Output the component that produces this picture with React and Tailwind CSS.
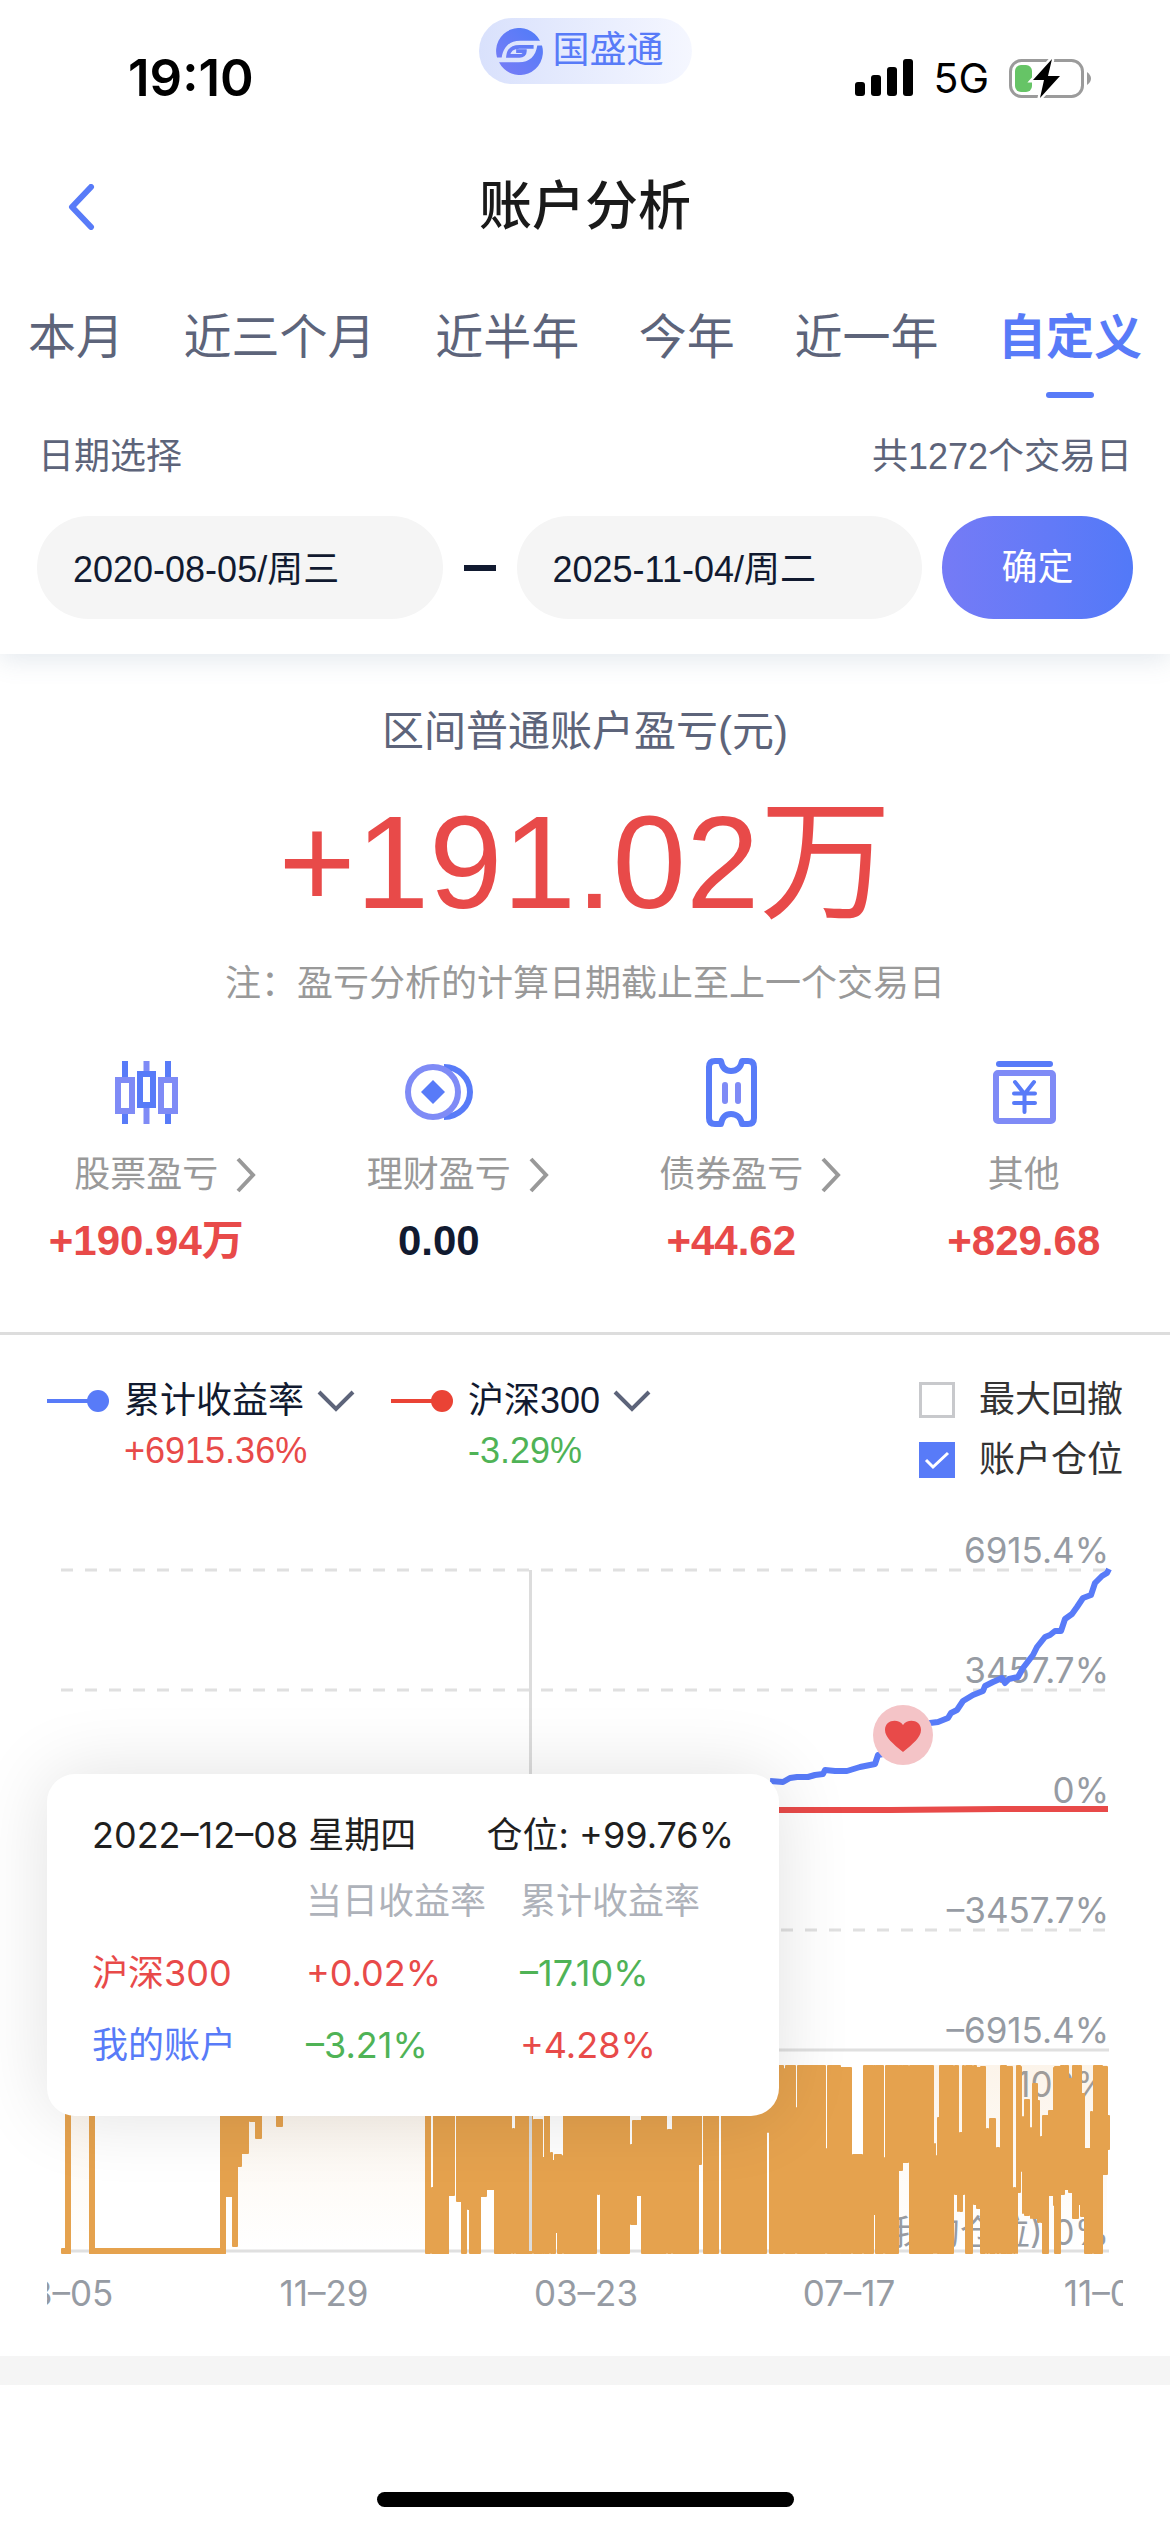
const tabs = ["本月", "近三个月", "近半年", "今年", "近一年", "自定义"];

const stats = [
  { label: "股票盈亏", value: "+190.94万", icon: CandleIcon, link: true, color: "text-[#e84a49]" },
  { label: "理财盈亏", value: "0.00", icon: CoinIcon, link: true, color: "text-[#111a30]" },
  { label: "债券盈亏", value: "+44.62", icon: TicketIcon, link: true, color: "text-[#e84a49]" },
  { label: "其他", value: "+829.68", icon: YuanIcon, link: false, color: "text-[#e84a49]" },
];

const tooltipRows = [
  { name: "沪深300", day: "+0.02%", total: "–17.10%", nameColor: "text-[#e84a49]", dayColor: "text-[#e84a49]", totalColor: "text-[#4fb356]" },
  { name: "我的账户", day: "–3.21%", total: "+4.28%", nameColor: "text-[#587bf8]", dayColor: "text-[#4fb356]", totalColor: "text-[#e84a49]" },
];

const yTicks = [
  { y: 1570, label: "6915.4%" },
  { y: 1690, label: "3457.7%" },
  { y: 1810, label: "0%" },
  { y: 1930, label: "–3457.7%" },
  { y: 2050, label: "–6915.4%" },
];

const xTicks = [
  { x: 61, label: "08–05" },
  { x: 324, label: "11–29" },
  { x: 586, label: "03–23" },
  { x: 849, label: "07–17" },
  { x: 1109, label: "11–04" },
];

// position columns: left, right, top, bottom
const columns = [
  [61, 71, 2248, 2254], [65, 71, 2065, 2254], [89, 95, 2065, 2254], [89, 226, 2248, 2254],
  [220, 226, 2065, 2254], [225, 233, 2065, 2197], [232, 238, 2065, 2247], [237, 242, 2065, 2167],
  [241, 249, 2065, 2154], [249, 256, 2065, 2122], [255, 262, 2065, 2139], [276, 283, 2065, 2127],
  [425, 431, 2065, 2254], [431, 449, 2187, 2254], [433, 449, 2065, 2254], [448, 455, 2065, 2196],
  [456, 462, 2065, 2202], [461, 467, 2065, 2254], [467, 470, 2065, 2210], [469, 481, 2065, 2254],
  [480, 487, 2065, 2197], [486, 495, 2065, 2190], [494, 512, 2065, 2254], [512, 515, 2128, 2254],
  [515, 533, 2065, 2254], [533, 543, 2119, 2254], [542, 545, 2157, 2254], [544, 550, 2065, 2254],
  [550, 553, 2152, 2254], [552, 556, 2160, 2254], [554, 562, 2154, 2233], [557, 563, 2155, 2254],
  [563, 597, 2065, 2254], [597, 600, 2065, 2195], [600, 630, 2065, 2254], [630, 637, 2144, 2225],
  [632, 637, 2120, 2225], [636, 642, 2120, 2196], [641, 667, 2065, 2254], [667, 672, 2129, 2254],
  [672, 699, 2065, 2254], [698, 702, 2065, 2165], [703, 719, 2065, 2254], [721, 767, 2065, 2254],
  [767, 769, 2065, 2133], [769, 784, 2065, 2254], [784, 786, 2068, 2254], [785, 796, 2065, 2254],
  [796, 798, 2107, 2254], [797, 826, 2065, 2254], [826, 828, 2148, 2254], [827, 841, 2065, 2254],
  [840, 852, 2067, 2254], [852, 863, 2154, 2254], [863, 874, 2065, 2254], [873, 876, 2065, 2215],
  [875, 884, 2065, 2254], [884, 886, 2157, 2254], [885, 899, 2065, 2254], [898, 903, 2065, 2171],
  [902, 909, 2065, 2163], [909, 934, 2065, 2254], [934, 936, 2143, 2254], [936, 938, 2155, 2254],
  [937, 940, 2117, 2254], [939, 954, 2065, 2254], [954, 958, 2065, 2195], [957, 959, 2065, 2212],
  [959, 963, 2132, 2212], [962, 965, 2065, 2195], [965, 973, 2065, 2254], [973, 977, 2065, 2205],
  [976, 981, 2067, 2209], [980, 986, 2066, 2254], [986, 989, 2128, 2254], [989, 996, 2118, 2254],
  [996, 1000, 2147, 2254], [1000, 1007, 2065, 2254], [1006, 1013, 2066, 2254], [1013, 1016, 2187, 2254],
  [1016, 1018, 2065, 2254], [1017, 1021, 2065, 2193], [1020, 1022, 2066, 2172], [1022, 1024, 2116, 2214],
  [1024, 1030, 2099, 2216], [1030, 1032, 2127, 2219], [1032, 1038, 2083, 2219], [1037, 1040, 2100, 2223],
  [1040, 1043, 2136, 2223], [1042, 1049, 2115, 2254], [1048, 1054, 2110, 2196], [1053, 1055, 2067, 2206],
  [1054, 1061, 2066, 2254], [1060, 1065, 2065, 2195], [1064, 1069, 2065, 2190], [1068, 1073, 2078, 2193],
  [1072, 1079, 2065, 2219], [1078, 1082, 2065, 2205], [1080, 1085, 2093, 2217], [1084, 1091, 2148, 2254],
  [1090, 1093, 2111, 2254], [1093, 1103, 2065, 2254], [1102, 1108, 2066, 2175], [1106, 1110, 2115, 2150],
];

const returns = [
  [770, 1781], [783, 1782], [790, 1778], [797, 1777], [808, 1777], [815, 1775], [823, 1774], [825, 1770],
  [835, 1771], [847, 1771], [860, 1767], [875, 1764], [878, 1755], [883, 1754], [903, 1735], [930, 1723],
  [938, 1722], [948, 1718], [951, 1713], [957, 1710], [963, 1701], [973, 1695], [983, 1691], [985, 1686],
  [993, 1682], [1002, 1678], [1005, 1683], [1009, 1679], [1018, 1677], [1023, 1668], [1033, 1655], [1037, 1647],
  [1045, 1637], [1050, 1635], [1055, 1631], [1061, 1631], [1065, 1619], [1072, 1614], [1077, 1607], [1083, 1598],
  [1091, 1595], [1095, 1583], [1102, 1576], [1107, 1573], [1109, 1569],
];

function CandleIcon() {
  return (
    <svg viewBox="0 0 72 72" className="size-[72px]" fill="none" strokeWidth="6">
      <path d="M15 5v16M15 58v10M58 5v16M58 58v10" stroke="#587bf8" />
      <path d="M36.5 5v12M36.5 51v17" stroke="#7f8bf6" />
      <path d="M8 24h14v31H8zM51 24h14v31H51z" stroke="#7f8bf6" />
      <path d="M30 18h13v31H30z" stroke="#587bf8" />
    </svg>
  );
}

function CoinIcon() {
  return (
    <svg viewBox="0 0 72 72" className="size-[72px]" fill="none" strokeWidth="6">
      <path d="M41 11a26 25 0 0 1 0 50" stroke="#587bf8" />
      <circle cx="30" cy="36" r="25" stroke="#7f8bf6" />
      <path d="M30 24l12 12-12 12-12-12z" fill="#587bf8" />
    </svg>
  );
}

function TicketIcon() {
  return (
    <svg viewBox="0 0 72 72" className="size-[72px]" fill="none" strokeWidth="6" strokeLinejoin="round">
      <path d="M20 5h6c1 6 4 10 10 10s10-4 11-10h6q6 0 6 6v51q0 6-6 6h-6c-1-6-5-10-11-10s-9 4-10 10h-6q-6 0-6-6V11q0-6 6-6z" stroke="#587bf8" />
      <path d="M30 29v16M43 29v16" stroke="#7f8bf6" strokeLinecap="round" />
    </svg>
  );
}

function YuanIcon() {
  return (
    <svg viewBox="0 0 72 72" className="size-[72px]" fill="none" strokeWidth="6">
      <path d="M11 8h51" stroke="#587bf8" strokeLinecap="round" />
      <rect x="8" y="17" width="57" height="48" rx="2" stroke="#7f8bf6" />
      <path d="M27 26l9.500 12 9.500-12M36.500 38v18M26 37.500h21M26 47h21" stroke="#587bf8" strokeWidth="4" strokeLinecap="round" />
    </svg>
  );
}

function LogoMark() {
  return (
    <svg viewBox="0 0 140 140" className="size-[47px]" fill="none">
      <defs>
        <linearGradient id="mark" gradientUnits="userSpaceOnUse" x1="0" y1="140" x2="140" y2="0">
          <stop offset="0" stopColor="#7a7cf6" />
          <stop offset="1" stopColor="#4f7cf8" />
        </linearGradient>
      </defs>
      <path d="M3 88A69 69 0 0 1 131 38H72C40 38 22 56 17 88z" fill="url(#mark)" />
      <path d="M137 52A69 69 0 0 1 9 102H68C100 102 118 84 123 52z" fill="url(#mark)" />
      <path d="M112 56H70C50 56 38 66 36 83H70C80 83 86 77 86 69H60" stroke="url(#mark)" strokeWidth="11" />
    </svg>
  );
}

function StatusBar() {
  return (
    <div className="grid grid-cols-3 px-[78px] pt-[18px] text-black">
      <div className="flex h-[120px] items-center pl-[50px] font-[Inter] text-[51px] leading-[60px] font-semibold">19:10</div>
      <div className="mx-auto flex h-[66px] w-[213px] items-center gap-[10px] rounded-full bg-gradient-to-r from-[#d9e1fc] to-[#f5f7ff] pl-[17px] text-[37px] leading-[66px] text-[#587bf8]">
        <LogoMark />
        <span>国盛通</span>
      </div>
      <div className="flex h-[120px] items-center justify-end gap-[20px]">
        <svg viewBox="0 0 58 38" className="h-[38px] w-[58px]">
          <rect y="23" width="10" height="14" rx="3" />
          <rect x="16" y="16" width="10" height="21" rx="3" />
          <rect x="32" y="8" width="10" height="29" rx="3" />
          <rect x="48" width="10" height="37" rx="3" />
        </svg>
        <span className="font-[Inter] text-[41px] leading-[60px]">5G</span>
        <svg viewBox="0 0 83 41" className="h-[41px] w-[83px]">
          <rect x="1.500" y="2.500" width="72" height="36" rx="11" fill="none" stroke="#9b9b9b" strokeWidth="3" />
          <path d="M78 14q4 3 4 6.500t-4 6.500z" fill="#9b9b9b" />
          <rect x="6" y="7" width="17" height="27" rx="6" fill="#66c466" />
          <path d="M43 1L24 22h11l-4 18 20-22H39z" stroke="#fff" strokeWidth="5" fill="#fff" />
          <path d="M43 1L24 22h11l-4 18 20-22H39z" />
        </svg>
      </div>
    </div>
  );
}

function Stat({ label, value, icon: Icon, link, color }) {
  return (
    <div className="flex flex-col items-center">
      <Icon />
      <div className="mt-[20px] grid w-full grid-cols-[1fr_auto_1fr] items-center text-[36px] leading-[54px] text-[#999]">
        <span />
        {link ? <a href="#">{label}</a> : <span>{label}</span>}
        {link ? (
          <svg viewBox="0 0 20 36" className="ml-[18px] h-[36px] w-[20px]" fill="none" stroke="#999" strokeWidth="4">
            <path d="M2 2l15 16L2 34" />
          </svg>
        ) : null}
      </div>
      <p className={`mt-[12px] text-[42px] leading-[54px] font-bold ${color}`}>{value}</p>
    </div>
  );
}

function Series({ name, value, dotColor, valueColor }) {
  return (
    <div className="grid grid-cols-[62px_auto] gap-x-[15px]">
      <svg viewBox="0 0 62 22" className="h-[22px] w-[62px] self-center">
        <path d="M0 11h44" stroke={dotColor} strokeWidth="4" />
        <circle cx="51" cy="11" r="11" fill={dotColor} />
      </svg>
      <div className="flex items-center gap-[12px]">
        <select aria-label={name} className="h-[54px] appearance-none bg-transparent text-[36px] leading-[54px] text-[#111a30]">
          <option>{name}</option>
        </select>
        <svg viewBox="0 0 38 22" className="h-[22px] w-[38px]" fill="none" stroke="#5d647a" strokeWidth="4">
          <path d="M2 2l17 17L36 2" />
        </svg>
      </div>
      <span className={`col-start-2 text-[36px] leading-[46px] ${valueColor}`}>{value}</span>
    </div>
  );
}

function Toggle({ id, label, checked }) {
  return (
    <div className="flex h-[60px] items-center gap-[24px]">
      <span className="grid size-[36px]">
        <input
          id={id}
          type="checkbox"
          defaultChecked={checked}
          className="peer col-start-1 row-start-1 size-[36px] appearance-none border-3 border-[#c8c9cc] bg-white checked:border-[#587bf8] checked:bg-[#587bf8]"
        />
        <svg viewBox="0 0 36 36" className="pointer-events-none col-start-1 row-start-1 hidden size-[36px] peer-checked:block" fill="none" stroke="#fff" strokeWidth="3">
          <path d="M7 18l7 7 15-14" />
        </svg>
      </span>
      <label htmlFor={id} className="text-[36px] leading-[60px] text-[#333]">{label}</label>
    </div>
  );
}

function Chart() {
  return (
    <svg viewBox="47 1520 1076 800" className="block w-full font-[Inter,'Noto_Sans_CJK_SC',sans-serif] text-[35px]" fill="none">
      <defs>
        <linearGradient id="area" x1="0" y1="0" x2="0" y2="1">
          <stop offset="0" stopColor="#e5a24e" stopOpacity="0.12" />
          <stop offset="1" stopColor="#e5a24e" stopOpacity="0" />
        </linearGradient>
      </defs>
      <g stroke="#e0e0e0" strokeWidth="3">
        {yTicks.map((t) => (
          <path key={t.y} d={`M61 ${t.y}H1109`} strokeDasharray={t.y === 2050 ? "none" : "12 12"} />
        ))}
        <path d="M61 2251H1109" />
      </g>
      <g fill="#969ba3" textAnchor="end">
        {yTicks.map((t) => (
          <text key={t.y} x="1109" y={t.y - 7}>{t.label}</text>
        ))}
        <text x="1109" y="2097">100%</text>
        <text x="1109" y="2245">(我的仓位) 0%</text>
      </g>
      <path d="M68 2065H92V2251H68zM238 2065H428V2251H238zM899 2065H1107V2251H899z" fill="url(#area)" />
      <g fill="#e5a24e">
        {columns.map(([x0, x1, y0, y1]) => (
          <rect key={`${x0}-${x1}-${y0}`} x={x0} y={y0} width={x1 - x0} height={y1 - y0} rx="1" />
        ))}
      </g>
      <path d="M530.500 1570V2251" stroke="#dcdcdc" strokeWidth="3" />
      <path d="M61 1810L890 1810 1000 1809 1108 1809" stroke="#e84a49" strokeWidth="6" />
      <polyline points={returns.map((p) => p.join(",")).join(" ")} stroke="#587bf8" strokeWidth="6" strokeLinejoin="round" />
      <circle cx="903" cy="1735" r="30" fill="#f4c4c7" />
      <path d="M903 1752C893 1744 885 1737 885 1730 885 1720 898 1718 903 1725 908 1718 921 1720 921 1730 921 1737 913 1744 903 1752z" fill="#e84a49" />
      <g fill="#969ba3" textAnchor="middle">
        {xTicks.map((t) => (
          <text key={t.x} x={t.x} y="2306">{t.label}</text>
        ))}
      </g>
    </svg>
  );
}

function Tooltip() {
  return (
    <div className="absolute top-[254px] left-0 h-[342px] w-[732px] rounded-[28px] bg-white px-[45px] pt-[31px] font-[Inter,'Noto_Sans_CJK_SC',sans-serif] text-[36px] shadow-[0_0_75px_rgba(0,0,0,0.12)]">
      <div className="flex justify-between leading-[60px] text-[#1f1f1f]">
        <span>2022–12–08 星期四</span>
        <span>仓位: +99.76%</span>
      </div>
      <table className="w-full table-fixed text-left leading-[72px]">
        <thead>
          <tr className="text-[#aeb2ba]">
            <th className="w-[214px]" aria-label="名称" />
            <th className="w-[214px] font-normal">当日收益率</th>
            <th className="font-normal">累计收益率</th>
          </tr>
        </thead>
        <tbody>
          {tooltipRows.map((row) => (
            <tr key={row.name}>
              <td className={row.nameColor}>{row.name}</td>
              <td className={row.dayColor}>{row.day}</td>
              <td className={row.totalColor}>{row.total}</td>
            </tr>
          ))}
        </tbody>
      </table>
    </div>
  );
}

export default function App() {
  return (
    <div className="min-h-screen overflow-hidden bg-white font-['Liberation_Sans','Noto_Sans_CJK_SC',sans-serif]">
      <header className="relative bg-white pb-[35px] shadow-[0_6px_24px_rgba(90,120,150,0.16)]">
        <StatusBar />
        <nav className="grid h-[138px] grid-cols-[1fr_auto_1fr] items-center px-[66px]">
          <button aria-label="返回" className="w-[30px]">
            <svg viewBox="0 0 30 46" className="h-[46px] w-[30px]" fill="none" stroke="#587bf8" strokeWidth="6" strokeLinecap="round" strokeLinejoin="round">
              <path d="M25 3L6 23l19 20" />
            </svg>
          </button>
          <h1 className="text-[53px] leading-[72px] font-medium text-[#1a1a1a]">账户分析</h1>
        </nav>
        <div className="flex justify-between px-[28px] pt-[26px]">
          {tabs.map((tab, i) => (
            <button key={tab} className={i === 5 ? "text-[48px] leading-[72px] font-bold text-[#587bf8]" : "self-start text-[48px] leading-[72px] text-[#5d647a]"}>
              {tab}
              {i === 5 ? <span className="mx-auto mt-[18px] block h-[6px] w-[48px] rounded-full bg-[#587bf8]" /> : null}
            </button>
          ))}
        </div>
        <div className="mt-[32px] flex justify-between px-[38px] text-[36px] leading-[54px] text-[#5d647a]">
          <span>日期选择</span>
          <span>共1272个交易日</span>
        </div>
        <div className="mt-[32px] flex items-center px-[37px] text-[36px] text-[#111a30]">
          <input aria-label="开始日期" defaultValue="2020-08-05/周三" className="h-[103px] min-w-0 flex-1 rounded-full bg-[#f5f5f5] px-[36px] pb-[3px]" />
          <span className="mx-[21px] h-[6px] w-[32px] bg-[#111a30]" />
          <input aria-label="结束日期" defaultValue="2025-11-04/周二" className="h-[103px] min-w-0 flex-1 rounded-full bg-[#f5f5f5] px-[36px] pb-[3px]" />
          <button className="ml-[20px] h-[103px] w-[191px] rounded-full bg-gradient-to-r from-[#757bf6] to-[#5279f8] text-white">确定</button>
        </div>
      </header>

      <section className="border-b-3 border-[#ddd] pt-[48px] pb-[64px] text-center">
        <h2 className="text-[42px] leading-[60px] text-[#5d647a]">区间普通账户盈亏(元)</h2>
        <p className="mt-[35px] text-[132px] leading-[132px] text-[#e84a49]">+191.02万</p>
        <p className="mt-[28px] text-[36px] leading-[54px] text-[#999]">注：盈亏分析的计算日期截止至上一个交易日</p>
        <div className="mt-[45px] grid grid-cols-4">
          {stats.map((s) => (
            <Stat key={s.label} {...s} />
          ))}
        </div>
      </section>

      <section className="px-[47px] pt-[35px]">
        <div className="flex items-start">
          <div className="flex flex-1 gap-[36px] pt-[4px]">
            <Series name="累计收益率" value="+6915.36%" dotColor="#587bf8" valueColor="text-[#e84a49]" />
            <Series name="沪深300" value="-3.29%" dotColor="#ea4335" valueColor="text-[#4fb356]" />
          </div>
          <div>
            <Toggle id="drawdown" label="最大回撤" checked={false} />
            <Toggle id="position" label="账户仓位" checked />
          </div>
        </div>
        <div className="relative mt-[30px]">
          <Chart />
          <Tooltip />
        </div>
      </section>

      <div className="mt-[36px] h-[29px] bg-[#f5f5f5]" />
      <div className="mx-auto mt-[107px] h-[15px] w-[417px] rounded-full bg-black" />
    </div>
  );
}
